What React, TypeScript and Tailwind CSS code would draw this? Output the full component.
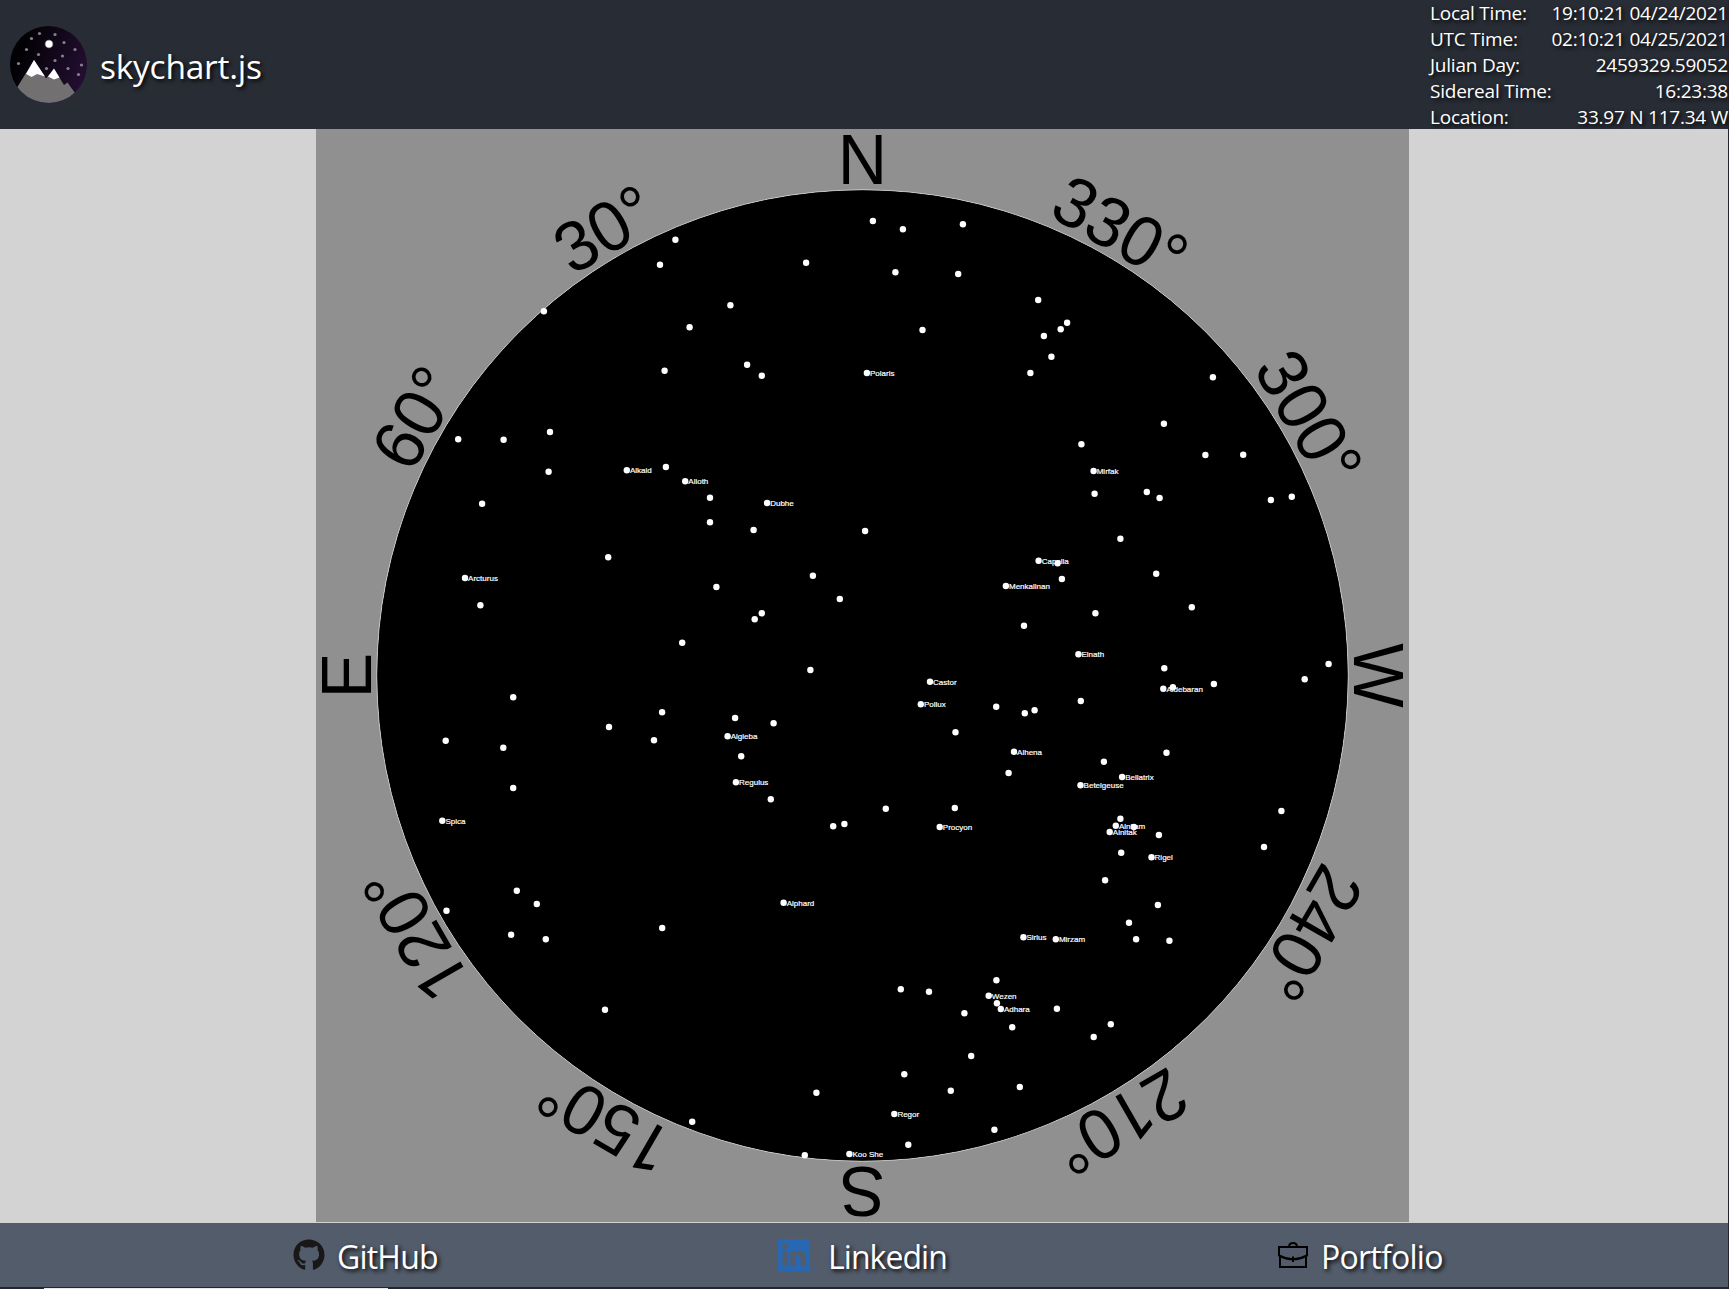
import { FaGithub } from "react-icons/fa";

type Star = [number, number, string?];

const STARS: Star[] = [
  [675.4, 239.7], [660, 264.7], [806.1, 262.7], [543.9, 311.3], [730.4, 305.3], [689.6, 327.3],
  [664.6, 370.7], [747.1, 364.7], [761.8, 375.7], [458.2, 439.3], [503.6, 439.7], [550, 432],
  [548.6, 471.7], [626.8, 470.3, "Alkaid"], [665.9, 467], [685.2, 481.3, "Alioth"], [710, 497.7],
  [482.1, 503.7], [767.1, 503, "Dubhe"], [710, 522.3],
  [872.9, 221], [902.9, 229.3], [962.9, 224.3], [895.4, 272.3], [958.2, 274], [922.5, 330],
  [1038.2, 300], [1067.1, 322.7], [1060.7, 329.3], [1043.9, 336], [1051.4, 356.7], [1030.4, 373],
  [866.9, 373, "Polaris"], [1212.9, 377.3], [1163.9, 423.7], [1081.4, 444.3], [1205.4, 455],
  [1243.2, 454.7], [1093.6, 471, "Mirfak"], [1094.6, 493.7], [1146.8, 492], [1159.6, 498],
  [1270.9, 500], [1291.8, 496.7],
  [753.6, 530], [865.1, 531], [608.2, 557.3], [465, 578, "Arcturus"], [480.4, 605.3], [812.9, 575.7],
  [716.4, 587], [839.8, 599], [761.8, 613.3], [754.7, 619.3], [682.2, 642.7], [810.4, 670],
  [513.2, 697.3], [662.1, 712.3], [609, 727], [654, 740.3], [735.1, 718], [773.6, 723.3],
  [727.6, 736.3, "Algieba"], [741.2, 756.3], [735.9, 782.3, "Regulus"], [770.8, 799.3],
  [445.7, 740.7], [503.3, 747.7], [513.2, 788], [442.3, 820.7, "Spica"], [833.2, 826.3],
  [844.4, 824], [516.8, 890.7],
  [1120.4, 538.7], [1038.6, 560.7, "Capella"], [1057.6, 563.3], [1061.9, 579],
  [1005.9, 586, "Menkalinan"], [1156.2, 573.7], [1191.8, 607.3], [1095.4, 613.3], [1024, 625.7],
  [1078.4, 654.3, "Elnath"], [1164.3, 668.3], [1163.3, 688.7, "Aldebaran"], [1172.9, 687.3],
  [1213.9, 684], [1304.7, 679.3], [1328.6, 664], [930, 681.7, "Castor"], [920.8, 704.3, "Pollux"],
  [996.2, 706.7], [1024.8, 713.3], [1034.6, 710.3], [1080.8, 701], [955.5, 732.3],
  [1014, 751.7, "Alhena"], [1008.6, 773], [1103.9, 761.7], [1166.5, 752.7],
  [1122.1, 777, "Bellatrix"], [1080.5, 785.3, "Betelgeuse"], [885.8, 808.7], [954.8, 808],
  [939.7, 827, "Procyon"], [1120.4, 818.7], [1115.8, 825.7, "Alnilam"], [1133.9, 827],
  [1109.7, 832, "Alnitak"], [1158.9, 835], [1121.2, 852.7], [1151.5, 857.3, "Rigel"],
  [1105.1, 880.3], [1281.4, 811], [1264, 847],
  [536.8, 904], [446.5, 910.7], [511.1, 934.7], [545.8, 939.3], [662.2, 928],
  [783.6, 902.7, "Alphard"], [605, 1009.7], [816.4, 1092.7], [692.2, 1121.7], [804.8, 1155.3],
  [849.4, 1154, "Koo She"],
  [1157.9, 905], [1129, 922.7], [1136.1, 939.3], [1169.4, 940.7], [1023.4, 937.3, "Sirius"],
  [1055.8, 939.3, "Mirzam"], [996.4, 980.3], [900.8, 989.3], [929, 991.7],
  [988.7, 995.7, "Wezen"], [996.9, 1003.3], [1000.8, 1009, "Adhara"], [964.4, 1013.3],
  [1012.2, 1027.3], [1056.9, 1008.7], [1110.8, 1024.3], [1093.7, 1037], [971.2, 1056],
  [904.3, 1074.3], [950.8, 1090.7], [1019.8, 1087], [894.3, 1114, "Regor"], [994.4, 1129.7],
  [908.3, 1144.7],
];

const BEARINGS: [number, string][] = [
  [0, "N"], [30, "30°"], [60, "60°"], [90, "E"], [120, "120°"], [150, "150°"],
  [180, "S"], [210, "210°"], [240, "240°"], [270, "W"], [300, "300°"], [330, "330°"],
];

const INFO: [string, string][] = [
  ["Local Time:", "19:10:21 04/24/2021"],
  ["UTC Time:", "02:10:21 04/25/2021"],
  ["Julian Day:", "2459329.59052"],
  ["Sidereal Time:", "16:23:38"],
  ["Location:", "33.97 N 117.34 W"],
];

const CX = 862.5;
const CY = 675.5;

function SkyChart() {
  return (
    <svg className="block h-[1093px] w-[1093px] overflow-visible bg-[#909090]" viewBox="316 129 1093 1093">
      <circle cx={CX} cy={CY} r={485.6} fill="#000" stroke="#fff" strokeWidth={0.7} />
      <circle cx={CX} cy={CY} r={485} fill="#000" />
      <g fontFamily="'Liberation Sans', Arial, sans-serif" fontSize={68.3} textAnchor="middle">
        {BEARINGS.map(([az, label]) => (
          <text
            key={label}
            transform={`rotate(${-az} ${CX} ${CY}) translate(${CX} ${CY - 491.2}) scale(1 1.04)`}
          >
            {label.split("").map((c, i) =>
              c === "1" ? (
                <tspan key={i} fontFamily="Roboto, sans-serif" fontSize={66.5}>{c}</tspan>
              ) : (
                <tspan key={i}>{c}</tspan>
              ),
            )}
          </text>
        ))}
      </g>
      <g fill="#fff" fontFamily="'Liberation Sans', Arial, sans-serif" fontSize={8}>
        {STARS.map(([x, y, name]) => (
          <g key={`${x}-${y}`}>
            <circle cx={x} cy={y} r={3.2} />
            {name && (
              <text x={x + 3.1} y={y + 2.9} stroke="#fff" strokeWidth={0.2}>{name}</text>
            )}
          </g>
        ))}
      </g>
    </svg>
  );
}

function Logo() {
  const dots = [
    [39.5, 33.5], [55, 34.5], [31.5, 38.5], [64, 42.5], [26.5, 49.5], [75, 49.5], [38.5, 54.5],
    [62.5, 56], [55, 60.5], [18.5, 63.5], [81.5, 65], [46.5, 68.5], [68, 68.5], [78.5, 74.5],
  ];
  return (
    <svg className="block h-[77px] w-[77px] shrink-0" viewBox="10 26 77 77">
      <defs>
        <linearGradient id="night" x1="0" y1="0.4" x2="1" y2="0.75">
          <stop offset="0.1" stopColor="#020104" />
          <stop offset="1" stopColor="#260f35" />
        </linearGradient>
        <clipPath id="disc">
          <circle cx={48.5} cy={64.5} r={38.5} />
        </clipPath>
      </defs>
      <g clipPath="url(#disc)">
        <rect x={10} y={26} width={77} height={77} fill="url(#night)" />
        {dots.map(([x, y]) => (
          <circle key={`${x}-${y}`} cx={x} cy={y} r={1.6} fill="#85808a" />
        ))}
        <circle cx={49} cy={44} r={4.3} fill="#fff" opacity={0.45} />
        <circle cx={49} cy={44} r={3.4} fill="#fff" />
        <path d="M10 103V96L18 86L34 60L46 78.500L54 69L64 85L67.500 82.500L75 93L87 103Z" fill="#737071" />
        <path d="M26 74L34 60L45 76.500L37 74L31.500 77L29 75.500Z M48 76.500L54 68.500L59.500 77.500L54 79.500Z" fill="#fff" />
      </g>
    </svg>
  );
}

function LinkedinIcon() {
  return (
    <svg className="block h-8 w-[38px]" viewBox="0 0 38 32" fill="#2867b2">
      <path
        fillRule="evenodd"
        d="M0 0H32V32H0Z M4.600 12V27.200H9.400V12Z M7 4.500A2.750 2.750 0 1 0 7 10A2.750 2.750 0 1 0 7 4.500Z M12.400 12V27.200H17.200V19.600C17.200 17.600 17.700 15.800 20.100 15.800C22.400 15.800 22.500 18 22.500 19.800V27.200H27.300V18.800C27.300 14.700 26.400 11.600 21.600 11.600C19.300 11.600 17.800 12.800 17.100 14.100V12Z"
      />
      <circle cx={35.5} cy={30} r={1.4} fill="none" stroke="#2867b2" strokeWidth={0.5} />
    </svg>
  );
}

function BriefcaseIcon() {
  return (
    <svg className="block h-[27px] w-[30px]" viewBox="0 0 30 27" fill="none" stroke="#000" strokeWidth={2}>
      <path d="M1 5H29V13.500Q15 21 1 13.500Z M2 14V25H28V14 M15 14.500V20 M11 5Q11 1 15 1Q19 1 19 5" />
    </svg>
  );
}

export default function App() {
  return (
    <div className="flex h-[1289px] w-[1729px] flex-col bg-[#23262e] pr-px font-['Open_Sans',sans-serif] text-white">
      <header className="flex h-[129px] items-start justify-between bg-[#282c34]">
        <div className="flex items-center pt-[26px] pl-2.5">
          <Logo />
          <h1 className="mt-[3px] ml-[13px] text-[33.5px] leading-[42px] tracking-[-0.25px] [text-shadow:2px_2px_4px_#000]">skychart.js</h1>
        </div>
        <dl className="w-[298px] text-[19px] leading-[26px] tracking-[-0.23px] [text-shadow:2px_2px_4px_#000]">
          {INFO.map(([label, value]) => (
            <div key={label} className="flex justify-between whitespace-nowrap">
              <dt>{label}</dt>
              <dd>{value}</dd>
            </div>
          ))}
        </dl>
      </header>
      <main className="flex h-[1094px] bg-[#d3d3d3] pl-[316px]">
        <SkyChart />
      </main>
      <footer className="flex h-16 bg-[#535c6a] text-[32px] leading-[42px] [text-shadow:2px_2px_4px_#000]">
        <a className="flex w-[485px] items-start pt-4 pl-[293px]">
          <FaGithub className="h-8 w-8 shrink-0 text-[#191717]" />
          <span className="-mt-[3px] ml-3 tracking-[-0.8px]">GitHub</span>
        </a>
        <a className="ml-[293px] flex w-[200px] items-start pt-4">
          <LinkedinIcon />
          <span className="-mt-[3px] ml-3 tracking-[-0.95px]">Linkedin</span>
        </a>
        <a className="ml-[300px] flex items-start pt-4">
          <span className="mt-[3px]"><BriefcaseIcon /></span>
          <span className="-mt-[3px] ml-[13px] tracking-[-0.75px]">Portfolio</span>
        </a>
      </footer>
      <div className="mt-px ml-11 h-px w-[344px] bg-[#e8e8e8]" />
    </div>
  );
}
